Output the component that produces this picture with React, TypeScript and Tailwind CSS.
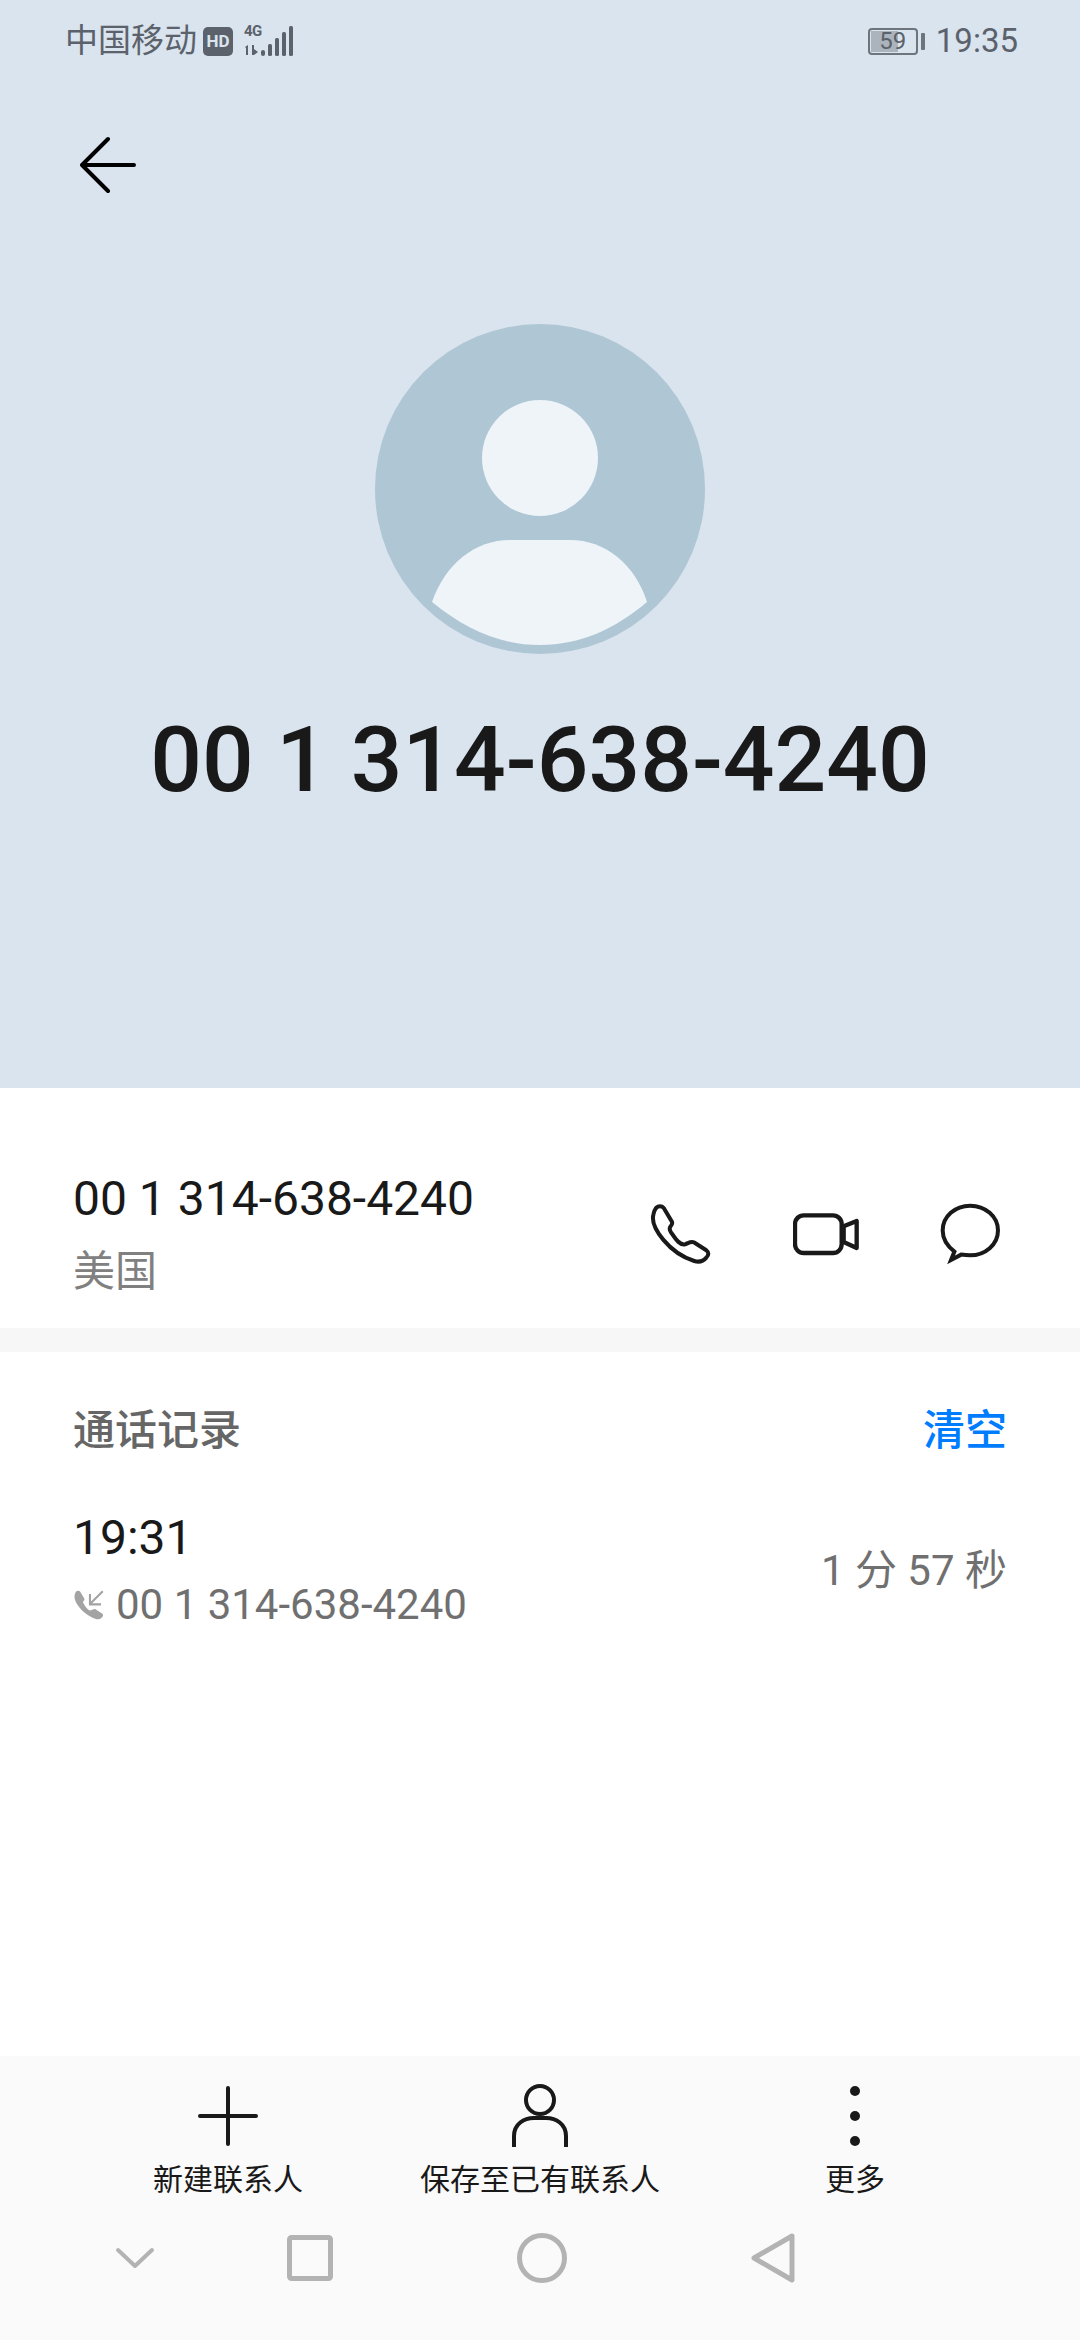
const phonePath =
  'M118 110 C125 103 135 103 141 110 L165 150 C168 156 166 160 161 165 C155 172 160 180 168 190 C178 205 190 222 205 218 C215 215 222 208 232 213 L268 236 C276 242 276 250 268 258 C258 270 245 272 232 268 C200 258 165 235 140 205 C115 175 105 150 110 130 C112 120 114 115 118 110 Z';

function SignalIcon() {
  return (
    <div className="relative w-[50px] h-[30px] ml-[11px]">
      <span className="absolute left-0 top-[-3px] text-[15px] leading-[17px] font-bold tracking-[-0.5px] text-[#5c626b]">4G</span>
      <svg width="50" height="30" viewBox="0 0 50 30" className="absolute left-0 top-0" fill="#5c626b">
        <path d="M1 21 L4 19 V29 H2 V22 Z M8 19 L10 19 V23 L14 26 L10 29 H8 Z" />
        <rect x="17" y="24" width="4" height="6" rx="2" />
        <rect x="24" y="18" width="4" height="12" rx="1.5" />
        <rect x="31" y="12" width="4" height="18" rx="1.5" />
        <rect x="38" y="6" width="4" height="24" rx="1.5" />
        <rect x="45" y="0" width="4" height="30" rx="1.5" />
      </svg>
    </div>
  );
}

function Battery() {
  return (
    <div className="flex items-center gap-[3px]">
      <div className="relative w-[50px] h-[27px] border-2 border-[#6d747c] rounded-[4px] overflow-hidden">
        <div className="absolute left-[1px] top-[1px] bottom-[1px] w-[27px] bg-[#abb4bc]" />
        <span className="absolute inset-0 flex items-center justify-center text-[24px] leading-none text-[#5c626b]">59</span>
      </div>
      <div className="w-[4px] h-[17px] rounded-[1px] bg-[#6d747c]" />
    </div>
  );
}

function ActionIcons() {
  return (
    <div className="flex items-center gap-[81px] mt-[32px] mr-[78px]">
      <svg width="62" height="62" viewBox="100 95 185 185" fill="none" stroke="#191919" strokeWidth="12" strokeLinejoin="round">
        <path d={phonePath} />
      </svg>
      <svg width="66" height="44" viewBox="525 125 198 126" fill="none" stroke="#191919" strokeWidth="13" strokeLinejoin="round">
        <rect x="531" y="132" width="140" height="113" rx="26" />
        <path d="M677 165 L716 149 V230 L677 212 Z" />
      </svg>
      <svg width="62" height="62" viewBox="965 98 185 185" fill="none" stroke="#191919" strokeWidth="12" strokeLinejoin="miter">
        <path d="M1008 243 C985 225 973 205 973 180 C973 138 1010 106 1055 106 C1100 106 1138 138 1138 180 C1138 222 1100 254 1055 254 C1045 254 1035 253 1028 252 L998 268 Z" />
      </svg>
    </div>
  );
}

function IncomingIcon() {
  return (
    <svg width="32" height="32" viewBox="100 95 185 185" className="mr-[11px]">
      <path d={phonePath} fill="#a3a3a3" />
      <path d="M272 108 L198 182 M198 124 V184 H262" fill="none" stroke="#a3a3a3" strokeWidth="12" />
    </svg>
  );
}

function BarItem({ label, icon, className }: { label: string; icon: React.ReactNode; className?: string }) {
  return (
    <div className={`flex flex-col items-center ${className ?? ''}`}>
      <div className="h-[64px] flex items-center justify-center">{icon}</div>
      <span className="mt-[12px] text-[30px] leading-[40px] text-[#191919]">{label}</span>
    </div>
  );
}

export default function App() {
  return (
    <div className="w-[1080px] h-[2340px] flex flex-col bg-white font-['Roboto','Noto_Sans_CJK_SC',sans-serif]">
      <header className="h-[1088px] shrink-0 bg-[#d9e4ee] flex flex-col">
        <div className="h-[82px] flex items-center justify-between pl-[65px] pr-[62px] text-[33px] text-[#5c626b]">
          <div className="flex items-center">
            <span className="leading-[40px]">中国移动</span>
            <span className="ml-[6px] w-[30px] h-[29px] rounded-[5px] bg-[#5c626b] flex items-center justify-center text-[17px] leading-none font-bold text-[#d9e4ee]">HD</span>
            <SignalIcon />
          </div>
          <div className="flex items-center gap-[11px]">
            <Battery />
            <span className="leading-[40px]">19:35</span>
          </div>
        </div>

        <div className="pl-[80px] pt-[54px]">
          <svg width="56" height="58" viewBox="0 0 56 58" fill="none" stroke="#000" strokeWidth="4" strokeLinecap="round" strokeLinejoin="round">
            <path d="M28 3 L2 29 L28 55 M2 29 H54" />
          </svg>
        </div>

        <div className="mt-[130px] flex flex-col items-center">
          <svg width="330" height="330" viewBox="0 0 330 330">
            <circle cx="165" cy="165" r="165" fill="#afc6d5" />
            <circle cx="165" cy="134" r="58" fill="#eef4f8" />
            <path d="M57 278 C70 240 100 216 135 216 L195 216 C230 216 260 240 272 278 C240 305 205 321 165 321 C125 321 90 305 57 278 Z" fill="#eef4f8" />
          </svg>
          <h1 className="mt-[51px] text-[91px] leading-[110px] font-medium text-[#191919] whitespace-nowrap">00 1 314-638-4240</h1>
        </div>
      </header>

      <section className="h-[240px] shrink-0 flex items-start justify-between pl-[73px] pt-[83px]">
        <div>
          <p className="text-[48px] leading-[56px] text-[#191919]">00 1 314-638-4240</p>
          <p className="mt-[17px] text-[42px] leading-[56px] text-[#808080]">美国</p>
        </div>
        <ActionIcons />
      </section>

      <div className="h-[24px] shrink-0 bg-[#f7f7f7]" />

      <section className="flex-1 px-[73px] pt-[51px]">
        <div className="flex items-center justify-between">
          <h2 className="text-[42px] leading-[56px] font-medium text-[#666666]">通话记录</h2>
          <span className="text-[42px] leading-[56px] font-medium text-[#007dff]">清空</span>
        </div>
        <div className="mt-[51px] flex items-center justify-between">
          <div>
            <p className="text-[48px] leading-[56px] text-[#191919]">19:31</p>
            <div className="mt-[13px] flex items-center h-[52px]">
              <IncomingIcon />
              <span className="text-[42px] leading-[52px] text-[#707070]">00 1 314-638-4240</span>
            </div>
          </div>
          <span className="text-[42px] leading-[56px] text-[#707070]">1 分 57 秒</span>
        </div>
      </section>

      <footer className="h-[284px] shrink-0 bg-[#fafafa] flex flex-col">
        <div className="pt-[28px] pl-[72px] pr-[72px] grid grid-cols-3">
          <BarItem
            label="新建联系人"
            icon={
              <svg width="60" height="60" viewBox="0 0 60 60" stroke="#191919" strokeWidth="4" strokeLinecap="round">
                <path d="M30 2 V58 M2 30 H58" />
              </svg>
            }
          />
          <BarItem
            label="保存至已有联系人"
            icon={
              <svg width="56" height="64" viewBox="0 0 56 64" fill="none" stroke="#191919" strokeWidth="4">
                <circle cx="28" cy="16" r="14" />
                <path d="M2 63 V52 C2 40 12 34 22 34 H34 C44 34 54 40 54 52 V63" />
              </svg>
            }
          />
          <BarItem
            className="pl-[6px]"
            label="更多"
            icon={
              <svg width="12" height="62" viewBox="0 0 12 62" fill="#191919">
                <circle cx="6" cy="6" r="5" />
                <circle cx="6" cy="31" r="5" />
                <circle cx="6" cy="56" r="5" />
              </svg>
            }
          />
        </div>
        <div className="mt-[33px] pl-[115px] flex items-center">
          <svg width="40" height="24" viewBox="0 0 40 24" fill="none" stroke="#b3b3b3" strokeWidth="4" strokeLinecap="round" strokeLinejoin="round">
            <path d="M3 4 L20 20 L37 4" />
          </svg>
          <svg className="ml-[132px]" width="46" height="46" viewBox="0 0 46 46" fill="none" stroke="#b3b3b3" strokeWidth="5">
            <rect x="2.5" y="2.5" width="41" height="41" rx="2" />
          </svg>
          <svg className="ml-[184px]" width="50" height="50" viewBox="0 0 50 50" fill="none" stroke="#b3b3b3" strokeWidth="5">
            <circle cx="25" cy="25" r="22.5" />
          </svg>
          <svg className="ml-[184px]" width="44" height="50" viewBox="0 0 44 50" fill="none" stroke="#b3b3b3" strokeWidth="5" strokeLinejoin="round">
            <path d="M41 3 L3 25 L41 47 Z" />
          </svg>
        </div>
      </footer>
    </div>
  );
}
